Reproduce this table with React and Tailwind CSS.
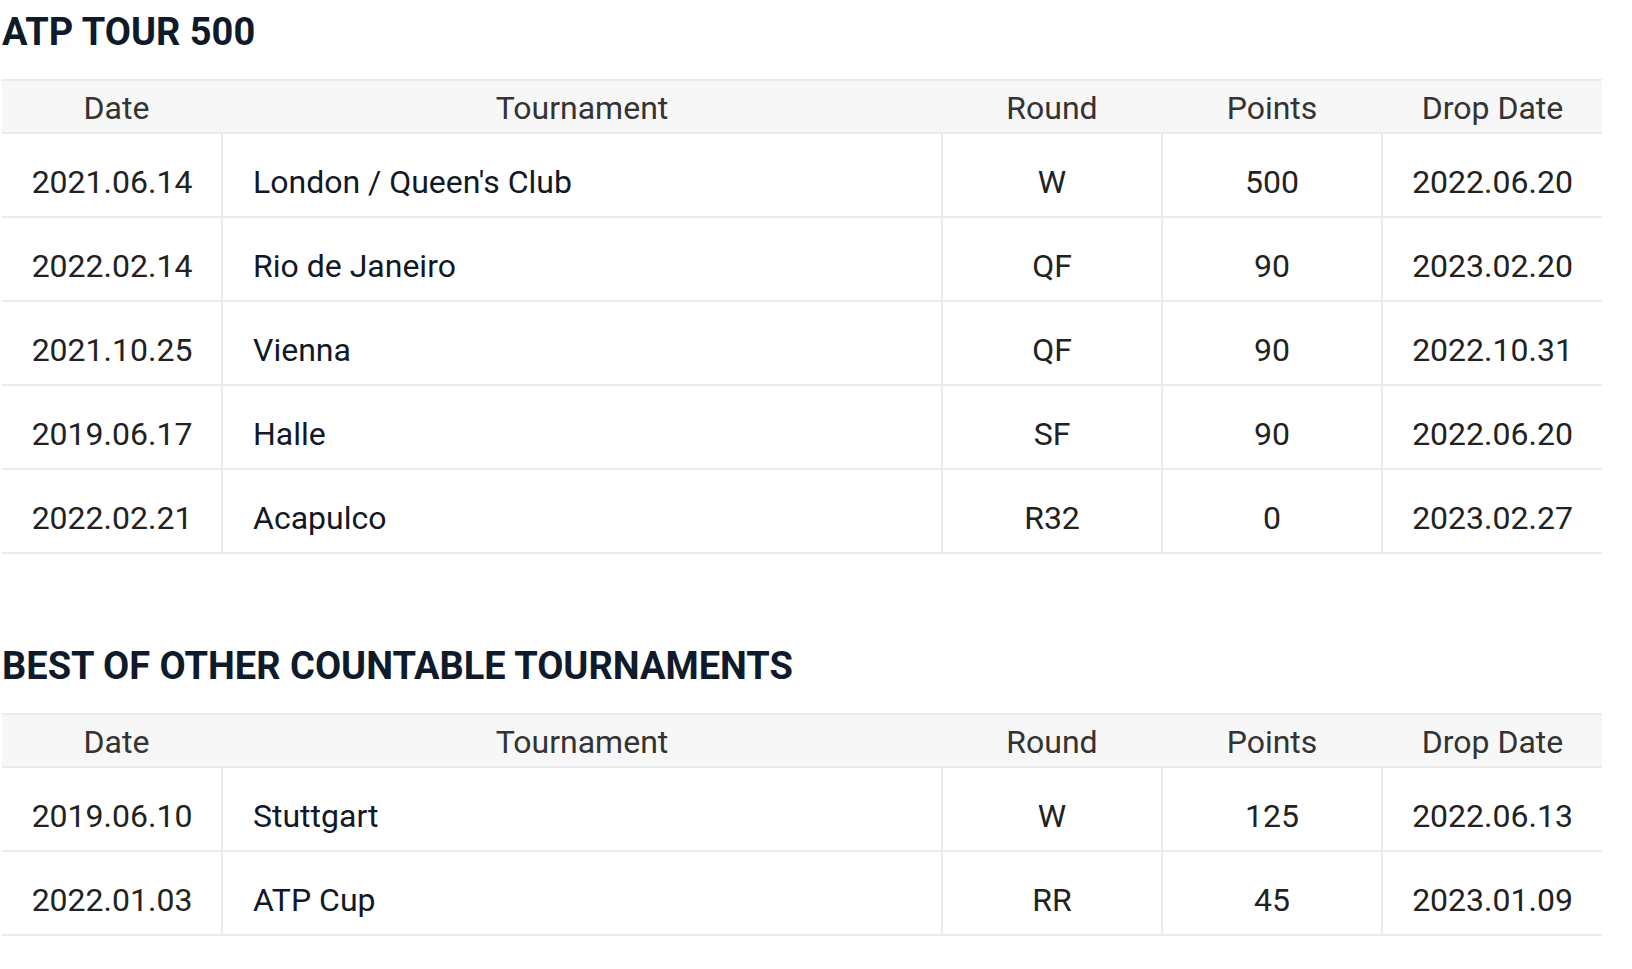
const sections = [
  {
    title: 'ATP TOUR 500',
    rows: [
      ['2021.06.14', "London / Queen's Club", 'W', '500', '2022.06.20'],
      ['2022.02.14', 'Rio de Janeiro', 'QF', '90', '2023.02.20'],
      ['2021.10.25', 'Vienna', 'QF', '90', '2022.10.31'],
      ['2019.06.17', 'Halle', 'SF', '90', '2022.06.20'],
      ['2022.02.21', 'Acapulco', 'R32', '0', '2023.02.27'],
    ],
  },
  {
    title: 'BEST OF OTHER COUNTABLE TOURNAMENTS',
    rows: [
      ['2019.06.10', 'Stuttgart', 'W', '125', '2022.06.13'],
      ['2022.01.03', 'ATP Cup', 'RR', '45', '2023.01.09'],
    ],
  },
];

const cols = 'grid grid-cols-[219px_720px_220px_220px_221px]';

function PointsTable({ rows }) {
  return (
    <div className="w-[1600px]">
      <div className={`${cols} bg-[#f7f7f7] border-y-2 border-[#ebebeb] text-[#333]`}>
        <div className="pt-[3px] pl-[10px] leading-[48px] text-center">Date</div>
        {['Tournament', 'Round', 'Points', 'Drop Date'].map((h) => (
          <div key={h} className="pt-[3px] leading-[48px] text-center border-l-2 border-transparent">
            {h}
          </div>
        ))}
      </div>

      {rows.map((r) => (
        <div key={r[0] + r[1]} className={`${cols} border-b-2 border-[#ebebeb]`}>
          <div className="pt-[24px] pb-[10px] pl-[1px] leading-[48px] text-center text-[#222]">{r[0]}</div>
          <div className="pt-[24px] pb-[10px] leading-[48px] pl-[30px] border-l-2 border-[#ebebeb] text-[#111827]">{r[1]}</div>
          <div className="pt-[24px] pb-[10px] leading-[48px] text-center border-l-2 border-[#ebebeb] text-[#222]">{r[2]}</div>
          <div className="pt-[24px] pb-[10px] leading-[48px] text-center border-l-2 border-[#ebebeb] text-[#222]">{r[3]}</div>
          <div className="pt-[24px] pb-[10px] leading-[48px] text-center border-l-2 border-[#ebebeb] text-[#222]">{r[4]}</div>
        </div>
      ))}
    </div>
  );
}

export default function App() {
  return (
    <div className="min-h-screen bg-white pl-[2px] text-[32px] font-['Roboto',sans-serif]">
      {sections.map((s, i) => (
        <section key={s.title} className={i > 0 ? 'mt-[80px]' : ''}>
          {/* titulo de la seccion */}
          <h2 className="pt-[9px] mb-6 text-[38px] leading-[46px] font-bold text-[#0f1a2b]">{s.title}</h2>
          <PointsTable rows={s.rows} />
        </section>
      ))}
    </div>
  );
}
